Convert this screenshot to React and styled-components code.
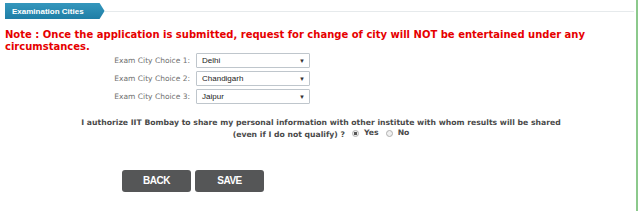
import styled, { createGlobalStyle } from 'styled-components';

const GlobalStyle = createGlobalStyle`
  html, body {
    margin: 0;
    padding: 0;
    background: #fff;
  }
`;

const Page = styled.div`
  width: 638px;
  height: 211px;
  box-sizing: border-box;
  border-right: 2px solid #8cc98c;
  padding-right: 1px;
  overflow: hidden;
  font-family: "DejaVu Sans", Verdana, sans-serif;
`;

const Panel = styled.div`
  width: 634px;
  height: 211px;
  display: flex;
  flex-direction: column;
`;

const HeaderBar = styled.div`
  display: flex;
  align-items: center;
  padding: 3px 0 0 5px;
`;

const Tab = styled.div`
  height: 16px;
  padding: 0 21px 0 7px;
  display: flex;
  align-items: center;
  color: #fff;
  font-family: "Liberation Sans", Arial, sans-serif;
  font-weight: bold;
  font-size: 8px;
  background: linear-gradient(#3497bd, #1f7ea6);
  clip-path: polygon(0 0, calc(100% - 5px) 0, 100% 50%, calc(100% - 5px) 100%, 0 100%);
`;

const HeaderLine = styled.div`
  flex: 1;
  height: 1px;
  background: #e6eaec;
`;

const Note = styled.p`
  margin: 10px 0 0 5px;
  color: #e60000;
  font-weight: bold;
  font-size: 10px;
  line-height: 12px;
`;

const Choices = styled.div`
  display: grid;
  grid-template-columns: 190px 114px;
  column-gap: 6px;
  row-gap: 3px;
  align-items: center;
`;

const ChoiceLabel = styled.label`
  justify-self: end;
  color: #707070;
  font-size: 7.5px;
`;

const CitySelect = styled.div`
  height: 15px;
  box-sizing: border-box;
  border: 1px solid #bfc6cc;
  border-radius: 1px;
  display: flex;
  align-items: center;
  justify-content: space-between;
  padding: 0 4px 0 5px;
  font-family: "Liberation Sans", Arial, sans-serif;
  font-size: 8px;
  color: #222;
`;

const Arrow = styled.span`
  font-size: 6px;
  color: #333;
`;

const Consent = styled.div`
  margin-top: 14px;
  text-align: center;
  padding-left: 8px;
  color: #4a4a4a;
  font-weight: bold;
  font-size: 7.7px;
  line-height: 10px;
`;

const RadioOption = styled.span`
  display: inline-flex;
  align-items: center;
  gap: 5px;
  margin-left: 7px;
`;

const RadioDot = styled.span`
  width: 7px;
  height: 7px;
  border-radius: 50%;
  border: 1px solid #b0b0b0;
  background: ${(p) => (p.checked ? 'radial-gradient(#555 0 1.4px, #eee 2px)' : '#f0f0f0')};
  box-sizing: border-box;
`;

const Actions = styled.div`
  display: flex;
  gap: 4px;
  margin-top: 30px;
  padding-left: 122px;
`;

const Button = styled.button`
  width: 69px;
  height: 22px;
  border: none;
  border-radius: 3px;
  background: #555657;
  color: #fff;
  font-family: "Liberation Sans", Arial, sans-serif;
  font-weight: bold;
  font-size: 10px;
  letter-spacing: -0.5px;
  padding: 0;
`;

const choices = ['Delhi', 'Chandigarh', 'Jaipur'];

export default function App() {
  return (
    <>
      <GlobalStyle />
      <Page>
        <Panel>
          <HeaderBar>
            <Tab>Examination Cities</Tab>
            <HeaderLine />
          </HeaderBar>
          <Note>
            Note : Once the application is submitted, request for change of city will NOT be entertained under any
            circumstances.
          </Note>
          <Choices>
            {choices.map((city, i) => [
              <ChoiceLabel key={`l${i}`}>Exam City Choice {i + 1}:</ChoiceLabel>,
              <CitySelect key={`s${i}`}>
                {city}
                <Arrow>▼</Arrow>
              </CitySelect>,
            ])}
          </Choices>
          <Consent>
            I authorize IIT Bombay to share my personal information with other institute with whom results will be shared
            <br />
            (even if I do not qualify) ?
            <RadioOption>
              <RadioDot checked />
              Yes
            </RadioOption>
            <RadioOption>
              <RadioDot />
              No
            </RadioOption>
          </Consent>
          <Actions>
            <Button>BACK</Button>
            <Button>SAVE</Button>
          </Actions>
        </Panel>
      </Page>
    </>
  );
}
